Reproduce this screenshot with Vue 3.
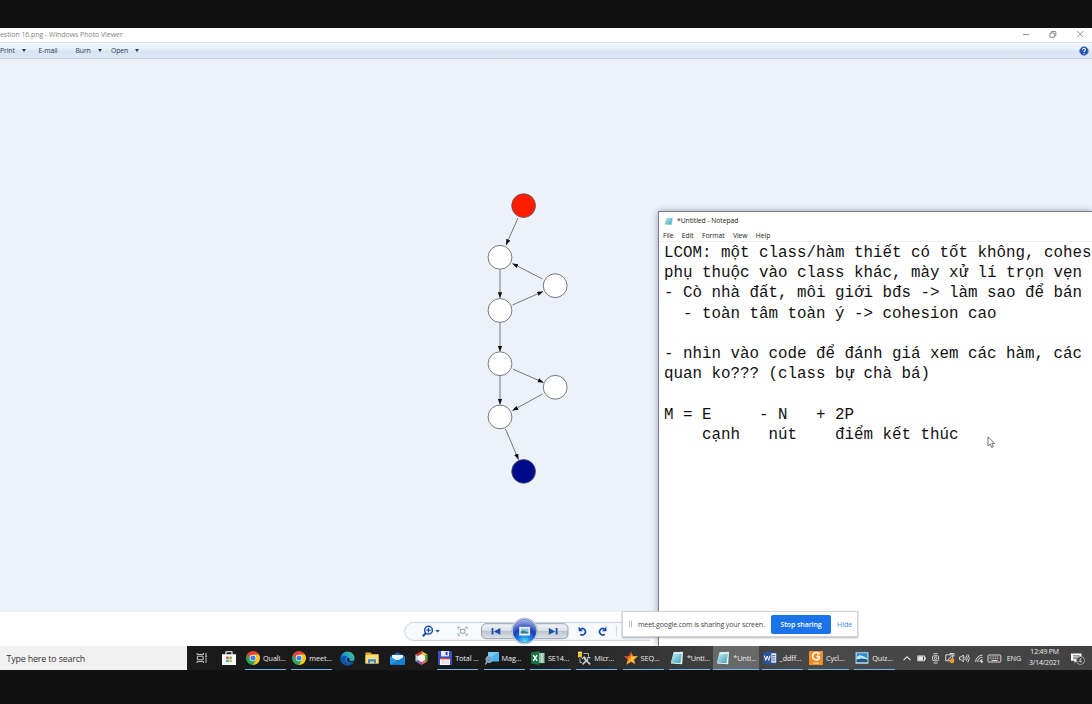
<script setup>
const menus = [
  { label: 'Print', w: 38.5, arrow: true },
  { label: 'E-mail', w: 37, arrow: false },
  { label: 'Burn', w: 35.5, arrow: true },
  { label: 'Open', w: 40, arrow: true },
]
const nodes = [
  [523.6, 205.6, '#ff1c00'],
  [500, 257.3, '#fff'],
  [555.2, 285.7, '#fff'],
  [500, 310.5, '#fff'],
  [500, 363.7, '#fff'],
  [555.2, 387.3, '#fff'],
  [500, 416.9, '#fff'],
  [523.6, 471.4, '#000a8c'],
]
const edges = [
  [518, 218, 506, 245],
  [500, 270, 500, 298],
  [542.5, 279, 512.5, 263.5],
  [512.5, 305, 543, 291.5],
  [500, 323, 500, 351.5],
  [500, 376, 500, 404.5],
  [513, 369.2, 543.5, 382.5],
  [542.5, 394, 512.5, 410.5],
  [505.5, 429, 518.5, 459.5],
]
const notes = `LCOM: một class/hàm thiết có tốt không, cohes
phụ thuộc vào class khác, mày xử lí trọn vẹn
- Cò nhà đất, môi giới bđs -> làm sao để bán
  - toàn tâm toàn ý -> cohesion cao

- nhìn vào code để đánh giá xem các hàm, các
quan ko??? (class bự chà bá)

M = E     - N   + 2P
    cạnh   nút    điểm kết thúc`
const browserTasks = [
  { icon: 'chrome', label: 'Quali...' },
  { icon: 'chrome', label: 'meet...' },
]
const tasks = [
  { icon: 'disk', label: 'Total ...' },
  { icon: 'magnify', label: 'Mag...' },
  { icon: 'excel', label: 'SE14...' },
  { icon: 'tools', label: 'Micr...' },
  { icon: 'star', label: 'SEQ...' },
  { icon: 'note', label: '*Unti...' },
  { icon: 'note', label: '*Unti...', active: true },
  { icon: 'word', label: '_ddff...' },
  { icon: 'foxit', label: 'Cycl...' },
  { icon: 'photo', label: 'Quiz...' },
]
</script>

<template>
  <div class="screen">
    <svg class="defs" width="0" height="0">
      <defs>
        <linearGradient id="noteG" x1="0" y1="0" x2="1" y2="1"><stop offset="0" stop-color="#d5f3f6" /><stop offset="1" stop-color="#3ba1bb" /></linearGradient>
        <linearGradient id="edgeG" x1="0" y1="1" x2="1" y2="0"><stop offset="0" stop-color="#0a57b2" /><stop offset=".5" stop-color="#1791d8" /><stop offset="1" stop-color="#57dc72" /></linearGradient>
        <linearGradient id="starG" x1="0" y1="0" x2="1" y2="1"><stop offset="0" stop-color="#8b3bd0" /><stop offset=".35" stop-color="#f04a2e" /><stop offset=".6" stop-color="#ffc428" /><stop offset="1" stop-color="#e0359c" /></linearGradient>
        <symbol id="chrome" viewBox="0 0 14 14">
          <path d="M7 7 .94 3.5A7 7 0 0 1 13.06 3.5Z" fill="#e74435" />
          <path d="M7 7 .94 3.5A7 7 0 0 0 7 14Z" fill="#2da653" />
          <path d="M7 7V14A7 7 0 0 0 13.06 3.5Z" fill="#fbc617" />
          <path d="M7 3.5h6.06L10 8.7Z" fill="#fbc617" /><path d="M4 8.7.94 3.5 7 3.5Z" fill="#e74435" /><path d="M4 8.7 7 14 10 8.7Z" fill="#2da653" />
          <circle cx="7" cy="7" r="3.3" fill="#fff" /><circle cx="7" cy="7" r="2.6" fill="#3c7fe8" />
        </symbol>
        <symbol id="disk" viewBox="0 0 14 14">
          <path d="M0 0H13L14 1V14H0Z" fill="#3850c4" /><path d="M3 0h8v5.4H3Z" fill="#e7eaf6" /><path d="M7.6 .8h2v3.4H7.6Z" fill="#2c43b8" />
          <path d="M2 7h10v7H2Z" fill="#fff" /><path d="M2 7h10v1.4H2Z" fill="#e0443d" /><path d="M3 10h8M3 12h8" stroke="#b9bfd8" stroke-width=".8" />
        </symbol>
        <symbol id="magnify" viewBox="0 0 14 14">
          <path d="M3 1H14V10.5H5L3 9Z" fill="#4bb2ef" /><path d="M3 1H14L3.5 7.5Z" fill="#78caf6" />
          <circle cx="4" cy="8.4" r="3.2" fill="#6f9fc4" stroke="#9db6c5" stroke-width=".8" /><path d="M2 11 0 13.5" stroke="#8998a5" stroke-width="1.6" />
        </symbol>
        <symbol id="excel" viewBox="0 0 14 14">
          <path d="M7 2h6.5v10H7Z" fill="#f5f9f6" stroke="#23794b" stroke-width=".7" /><path d="M9 4h1.5M9 6h1.5M9 8h1.5M9 10h1.5M11.4 4h1.5M11.4 6h1.5M11.4 8h1.5M11.4 10h1.5" stroke="#23794b" />
          <path d="M0 1.6 8.4 0V14L0 12.4Z" fill="#1b7446" /><path d="M2.2 4.2 6.2 9.8M6.2 4.2 2.2 9.8" stroke="#fff" stroke-width="1.4" />
        </symbol>
        <symbol id="tools" viewBox="0 0 14 14">
          <path d="M1 .8h4v5.6H1Z" fill="#f0be35" /><path d="M1 .8h4v1.4H1Z" fill="#fbe38d" /><path d="M6.5 2.5H11.5v3M3 7.5v4h2" fill="none" stroke="#d2d2d2" stroke-width=".8" />
          <path d="M5.6 13.4 11 8M7 7.4l6.2 6" stroke="#cbd2d6" stroke-width="1.5" /><path d="M5 7.8 7.2 6 9 7.4M10.3 7.3a2.2 2.2 0 0 1 3-.4" fill="none" stroke="#cbd2d6" stroke-width="1.3" />
        </symbol>
        <symbol id="star" viewBox="0 0 14 14">
          <path d="M7 .3 9 5l5 .3-3.9 3.3 1.5 5L7 10.8l-4.6 2.9 1.4-5.1L0 5.3 5 5Z" fill="url(#starG)" /><path d="M7 3.3 8.2 6.3l3 .2-2.3 2 .7 2.8L7 9.6Z" fill="#ffcd3a" />
        </symbol>
        <symbol id="note" viewBox="0 0 14 14">
          <path d="M4.2 1.2 13 .8 12.2 13.2 1 12.6Z" fill="#e9f4f4" /><path d="M3.6 1.6 12 1.6 10.4 12.2.8 11.6Z" fill="url(#noteG)" /><path d="M3.6 1.4 12 1.4 11.8 2.8 3.3 2.6Z" fill="#f1fbfb" />
        </symbol>
        <symbol id="word" viewBox="0 0 14 14">
          <path d="M7 2h6.5v10H7Z" fill="#f5f7fb" stroke="#2a5699" stroke-width=".7" /><path d="M9 4.5h3.4M9 6.2h3.4M9 8h3.4M9 9.7h3.4" stroke="#2a5699" stroke-width=".8" />
          <path d="M0 1.6 8.4 0V14L0 12.4Z" fill="#27549b" /><path d="M1.4 4.5 2.7 9.4 4.2 5 5.7 9.4 7 4.5" fill="none" stroke="#fff" stroke-width="1" />
        </symbol>
        <symbol id="foxit" viewBox="0 0 14 14">
          <path d="M0 0H14V14H0Z" fill="#f68b1f" /><path d="M10.4 3.2A3.7 3.7 0 1 0 10.4 7.2V5.8H7.6" fill="none" stroke="#fff" stroke-width="1.6" /><path d="M8 4.8 11.6 1.4" stroke="#fff" /><path d="M4 12.2h6" stroke="#ffd3a0" stroke-width="1.2" />
        </symbol>
        <symbol id="photo" viewBox="0 0 14 14">
          <path d="M.8 1.4H13.2V12.6H.8Z" fill="#eef6fa" stroke="#8bb9d6" stroke-width=".6" /><path d="M1.6 2.2h10.8v9H1.6Z" fill="#2c8bd0" /><path d="M1.6 6.5C4 3.2 6 4 9 5.6l3.4 1.6V9H1.6Z" fill="#b9e4f5" /><path d="M1.6 8.4 7 7.6l5.4 1V11.2H1.6Z" fill="#21577b" />
        </symbol>
      </defs>
    </svg>

    <div class="letterbox"></div>

    <header class="titlebar">
      <span class="title">estion 16.png - Windows Photo Viewer</span>
      <svg class="winbtns" width="72" height="14" viewBox="0 0 72 14" fill="none" stroke="#858585" stroke-width=".9">
        <path d="M3 6.6h6.2M30 5h4.3v4.3H30ZM31.4 5V3.5h4.4v4.4h-1.5M57.3 3.2 63.3 9.2M63.3 3.2 57.3 9.2" />
      </svg>
    </header>

    <nav class="toolbar">
      <span v-for="m in menus" :key="m.label" class="menu" :style="{ width: m.w + 'px' }">
        <span>{{ m.label }}</span>
        <i v-if="m.arrow" class="arrow"></i>
      </span>
      <svg class="help" width="10" height="10" viewBox="0 0 10 10">
        <circle cx="5" cy="5" r="4.4" fill="#1d4fb5" stroke="#8a9dbc" stroke-width=".8" />
        <path d="M3.5 3.7C3.6 1.9 6.7 2 6.5 3.8 6.4 4.7 5 4.8 5 6M5 7.1v1" stroke="#fff" stroke-width="1.1" fill="none" />
      </svg>
    </nav>

    <main class="canvas">
      <svg class="graph" width="100" height="300" viewBox="474 190 100 300">
        <defs>
          <marker id="arr" markerUnits="userSpaceOnUse" markerWidth="7" markerHeight="6" refX="5.8" refY="2.2" orient="auto"><path d="M0 0 6 2.2 0 4.4Z" fill="#111" /></marker>
        </defs>
        <line v-for="(e, i) in edges" :key="'e' + i" :x1="e[0]" :y1="e[1]" :x2="e[2]" :y2="e[3]" stroke="#555" stroke-width=".8" marker-end="url(#arr)" />
        <circle v-for="(n, i) in nodes" :key="'n' + i" :cx="n[0]" :cy="n[1]" r="11.9" :fill="n[2]" stroke="#57575c" stroke-width=".8" />
      </svg>
    </main>

    <footer class="controls">
      <svg width="250" height="34" viewBox="400 612 250 34">
        <defs>
          <linearGradient id="btn" x1="0" y1="0" x2="0" y2="1"><stop offset="0" stop-color="#f2f5f9" /><stop offset=".45" stop-color="#dce1e8" /><stop offset=".5" stop-color="#bcc4ce" /><stop offset="1" stop-color="#dde3ea" /></linearGradient>
          <radialGradient id="orb" cx=".5" cy=".98" r=".95"><stop offset="0" stop-color="#5fe8ff" /><stop offset=".3" stop-color="#1c86ea" /><stop offset=".6" stop-color="#1a3cb4" /><stop offset="1" stop-color="#a3b2e6" /></radialGradient>
        </defs>
        <rect x="404.7" y="622.4" width="260" height="18" rx="9" fill="#f7fafd" stroke="#bcc5cf" stroke-width=".8" />
        <g fill="none" stroke="#174fa6">
          <circle cx="428.5" cy="630.2" r="3.9" stroke-width="1.5" /><path d="M425.7 633.2 422.8 636.2" stroke-width="2.1" /><path d="M426.3 630.2h4.4M428.5 628v4.4" stroke-width="1.3" />
        </g>
        <path d="M435.4 630h4.4l-2.2 2.5Z" fill="#174fa6" />
        <g fill="none" stroke="#8a9bb2" stroke-width=".9"><rect x="460.3" y="629.3" width="4.6" height="3.8" /><path d="M458 629.3v-2h2M465.2 627.3h2v2M458 633.2v2h2M467.2 633.2v2h-2" /></g>
        <rect x="481.5" y="623.7" width="86.5" height="15" rx="4.5" fill="url(#btn)" stroke="#8e99a7" stroke-width=".9" />
        <path d="M492.5 628.1v6.5M556.6 628.1v6.5" stroke="#174fa6" stroke-width="1.8" /><path d="M500.3 628v6.8l-6.4-3.4ZM548.8 628v6.8l6.4-3.4Z" fill="#174fa6" />
        <circle cx="524.6" cy="631" r="13" fill="#edf1f7" stroke="#a5afbd" stroke-width=".8" /><circle cx="524.6" cy="631" r="11.7" fill="url(#orb)" stroke="#3c59a6" stroke-width=".5" />
        <rect x="519.3" y="627" width="10.6" height="8.3" fill="#f9fcff" stroke="#b9cbe3" stroke-width=".5" /><path d="M520.7 628.5h7.8v5h-7.8Z" fill="#8cc4e0" /><path d="M520.7 631.5l3-1 4.8 2v1h-7.8Z" fill="#357d83" />
        <g fill="none" stroke="#174fa6" stroke-width="1.7"><path d="M580.6 629a3.2 3.2 0 1 1-.3 5.3M604.4 629a3.2 3.2 0 1 0 .3 5.3" /></g>
        <path d="M578.6 626.6v4.7h4.5ZM606.4 626.6v4.7H601.9Z" fill="#174fa6" />
        <path d="M616.4 625.6v11" stroke="#c1c9d3" stroke-width=".8" />
      </svg>
    </footer>

    <section class="notepad">
      <div class="np-title">
        <svg width="10" height="10"><use href="#note" /></svg>
        <span>*Untitled - Notepad</span>
      </div>
      <div class="np-menu"><span>File</span><span>Edit</span><span>Format</span><span>View</span><span>Help</span></div>
      <pre class="np-text">{{ notes }}</pre>
    </section>

    <svg class="cursor" width="9" height="13" viewBox="0 0 9 13"><path d="M1 .9V10L3.2 8 4.7 11.5 6.3 10.8 4.9 7.4H7.8Z" fill="#fff" stroke="#444" stroke-width=".75" /></svg>

    <aside class="share">
      <i class="grip"></i>
      <span class="share-text">meet.google.com is sharing your screen.</span>
      <button>Stop sharing</button>
      <span class="hide">Hide</span>
    </aside>

    <div class="taskbar">
      <div class="search">Type here to search</div>
      <div class="pinned first">
        <svg width="12" height="12" viewBox="0 0 12 12" fill="none" stroke="#ddd" stroke-width=".9"><path d="M1 1v1.4h6.5V1M1 11V9.6h6.5V11M1.4 4.2h5.7v3.6H1.4ZM10 1v2M10 5.5V11" /><path d="M9.3 3.3h1.4v1.6H9.3Z" fill="#ddd" stroke="none" /></svg>
        <svg width="14" height="14" viewBox="0 0 14 14"><path d="M4 3.4V.8h6v2.6" fill="none" stroke="#fff" stroke-width="1.1" /><path d="M0 3.2h14V14H0Z" fill="#f7f7f7" /><path d="M4.2 5.6h2.5v2.5H4.2Z" fill="#e9533a" /><path d="M7.3 5.6h2.5v2.5H7.3Z" fill="#7fb837" /><path d="M4.2 8.7h2.5v2.5H4.2Z" fill="#2ba3e3" /><path d="M7.3 8.7h2.5v2.5H7.3Z" fill="#f7b72a" /></svg>
      </div>
      <div class="tasks">
        <div v-for="t in browserTasks" :key="t.label" class="task"><svg width="14" height="14"><use :href="'#' + t.icon" /></svg><span>{{ t.label }}</span></div>
      </div>
      <div class="pinned second">
        <svg width="15" height="15" viewBox="0 0 15 15"><circle cx="7.5" cy="7.5" r="7" fill="url(#edgeG)" /><path d="M.6 7.2C2.2 4.2 6 4.6 7.4 6 5.6 6.5 5.2 8.6 6.2 10.3 7.4 12 10 12.5 13.2 11.2 11.5 14 8 15 5 14 2 13 .3 10.5.6 7.2Z" fill="#0c55a8" /><path d="M7.4 7.3c.9-.9 2.4-.2 2.2 1-.1.6-.5.9-.2 1.3.6.8 2.6.9 4.6-.2l-.4 1.4c-1.7 1-4 1.1-5.4 0-1.3-.9-1.6-2.5-.8-3.5Z" fill="#191919" /></svg>
        <svg width="14" height="14" viewBox="0 0 14 14"><path d="M.5 1.5h5L7 3h6.5v9.5H.5Z" fill="#e9a92b" /><path d="M.5 4h13v8.5H.5Z" fill="#fddc79" /><path d="M3 8.3h8v4.2H9v-2H5v2H3Z" fill="#348fda" /></svg>
        <svg width="15" height="14" viewBox="0 0 15 14"><path d="M0 5.3 7.5 1.2 15 5.3v8.2H0Z" fill="#1465b4" /><path d="M2 4h11v5H2Z" fill="#eef7fd" /><path d="M0 5.3 7.5 10 15 5.3v8.2H0Z" fill="#1f97ea" /><path d="M0 13.5 7.5 10 15 5.3v8.2Z" fill="#1680d6" /></svg>
        <svg width="13" height="14" viewBox="0 0 13 14"><path d="M6.5 0 12.5 3.5 6.5 7Z" fill="#e6c62b" /><path d="M6.5 0 .5 3.5 6.5 7Z" fill="#d9362e" /><path d="M.5 3.5v7l6-3.5Z" fill="#c7cfd7" /><path d="M12.5 3.5v7L6.5 7Z" fill="#52a744" /><path d="M6.5 14 .5 10.5 6.5 7Z" fill="#7c65b6" /><path d="M6.5 14l6-3.5L6.5 7Z" fill="#e46a54" /><path d="M6.5 3 10 5v4L6.5 11 3 9V5Z" fill="#f4f4ee" /></svg>
      </div>
      <div class="tasks">
        <div v-for="(t, i) in tasks" :key="i" class="task" :class="{ active: t.active }"><svg width="14" height="14"><use :href="'#' + t.icon" /></svg><span>{{ t.label }}</span></div>
      </div>
      <div class="tray">
        <svg width="102" height="14" viewBox="902 651 102 14" fill="none" stroke="#e8e8e8" stroke-width=".9">
          <path d="M903.6 660.1 907 656.7 910.4 660.1" stroke-width="1.1" />
          <rect x="917.8" y="656" width="6.7" height="4.8" /><path d="M918.6 656.8h4v3.2h-4Z" fill="#e8e8e8" /><path d="M925.3 657.2v2.5" />
          <rect x="932.6" y="655.8" width="6" height="5" rx="1.2" /><circle cx="935.6" cy="658.3" r="1.2" /><path d="M933.6 653.7h4M933.6 663h4" />
          <path d="M945.7 654.8h7v6h-7Z" /><path d="M948 660.3c0-3 3.5-1.8 3.5-4.6M949.5 653.5h4.5v3" /><circle cx="952" cy="660.9" r="2.3" fill="#f49a25" stroke="none" />
          <path d="M959.5 657h1.7l2-2v6.7l-2-2h-1.7ZM964.8 656.6q1 1.7 0 3.4M966.3 655.4q2 3 0 5.8M967.8 654.3q3 4 0 8" />
          <path d="M975.6 662a7 7 0 0 1 6.8-6.9M977.7 662a5 5 0 0 1 4.7-4.8M979.8 662a3 3 0 0 1 2.6-2.7" /><circle cx="981.8" cy="661.6" r=".8" fill="#eee" />
          <rect x="988" y="655" width="12.8" height="7" rx=".8" /><path d="M989.7 657h9.4M989.7 658.7h9.4" stroke-dasharray="1 .8" /><path d="M991.5 660.5h6" />
        </svg>
        <span class="lang">ENG</span>
        <div class="clock"><span>12:49 PM</span><span>3/14/2021</span></div>
        <div class="action">
          <svg width="11" height="11" viewBox="0 0 11 11"><path d="M0 .5h10.5v7.2H6L3.6 10V7.7H0Z" fill="#fff" /><path d="M2 2.7h6.5M2 4.2h6.5M2 5.7h4" stroke="#444" stroke-width=".7" /></svg>
          <span class="badge">4</span>
        </div>
      </div>
    </div>
    <div class="letterbox"></div>
  </div>
</template>

<style>
body { background: #111; overflow: hidden; }
</style>

<style scoped>
.screen { position: relative; display: grid; grid-template-rows: 28px 14px 17px 553px 34px 24px 34px; width: 1092px; height: 704px; overflow: hidden; background: #111; font-family: "Open Sans", "Noto Sans", sans-serif; }
.defs { position: absolute; }
.letterbox { background: #111; }
.titlebar { display: flex; justify-content: space-between; background: #fff; color: #858585; font-size: 7px; line-height: 14.5px; white-space: nowrap; }
.title { letter-spacing: -.06px; }
.toolbar { display: flex; align-items: center; background: linear-gradient(#f5f9fd, #e3edf8 45%, #d7e4f2 55%, #dce8f5); border-top: 1px solid #dce3eb; border-bottom: 1px solid #c3d0df; box-sizing: border-box; color: #1e395b; font-size: 6.8px; line-height: 9px; letter-spacing: -.08px; }
.menu { display: flex; align-items: center; gap: 7px; flex: none; }
.arrow { border: 2.4px solid transparent; border-top: 3px solid #1e395b; border-bottom: 0; }
.help { margin-left: auto; margin-right: 3px; }
.canvas { background: #edf2fa; display: flex; padding: 131px 0 0 474px; }
.graph { flex: none; }
.controls { background: #fff; padding-left: 400px; overflow: hidden; }
.controls svg { display: block; }
.notepad { position: absolute; left: 658px; top: 211px; width: 434px; height: 435px; box-sizing: border-box; background: #fff; border-left: 1px solid #777d86; border-top: 1px solid #777d86; box-shadow: 0 0 7px rgba(30, 45, 75, .4); display: flex; flex-direction: column; clip-path: inset(-9px 0 0 -9px); }
.np-title { display: flex; align-items: center; gap: 3px; height: 17px; padding-left: 5px; font-size: 6.8px; letter-spacing: -.05px; color: #222; }
.np-menu { display: flex; gap: 8.3px; height: 13px; align-items: center; padding-left: 4px; font-size: 6.8px; color: #222; border-bottom: 1px solid #f0f0f0; box-sizing: border-box; letter-spacing: -.05px; }
.np-text { margin: 0; padding: 1px 0 0 5px; font-family: "Liberation Mono", monospace; font-size: 15.83px; line-height: 20.22px; color: #111; }
.cursor { position: absolute; left: 987px; top: 436px; }
.share { position: absolute; left: 622px; top: 611px; width: 236px; height: 26px; box-sizing: border-box; display: flex; align-items: center; background: #fff; border: 1px solid #d0d2d6; box-shadow: 0 1px 2px rgba(0, 0, 0, .3); padding-left: 6px; color: #444; font-size: 7px; }
.grip { width: 1px; height: 6px; border-left: 1px solid #bbb; border-right: 1px solid #bbb; margin-right: 6px; }
.share-text { width: 133px; white-space: nowrap; letter-spacing: -.12px; }
.share button { width: 60px; height: 19px; padding: 0; border: 0; border-radius: 2px; background: #1a73e8; color: #fff; font: 600 7px "Open Sans", sans-serif; letter-spacing: -.1px; }
.hide { margin-left: 6px; color: #4285e8; }
.taskbar { display: flex; background: linear-gradient(90deg, #1a1a1a 0 48%, #3e3e3e 64%, #494949 75%, #424242); color: #eee; }
.search { width: 187px; flex: none; box-sizing: border-box; padding-left: 6.5px; background: #f2f2f2; color: #333; font-size: 8.9px; letter-spacing: -.25px; word-spacing: .2px; line-height: 25px; }
.search { letter-spacing: -.2px; }
.pinned { display: flex; align-items: center; flex: none; box-sizing: border-box; }
.first { width: 58px; padding-left: 9px; gap: 14px; }
.second { width: 99.5px; padding-left: 2px; gap: 10.5px; }
.tasks { display: flex; flex: none; }
.task { width: 46.35px; box-sizing: border-box; display: flex; align-items: center; gap: 3px; padding-left: 1px; font-size: 7.3px; letter-spacing: -.12px; white-space: nowrap; background: linear-gradient(#76b3ec, #76b3ec) 0 100% / 41.3px 1px no-repeat; }
.task svg { flex: none; }
.active { background: linear-gradient(#76b3ec, #76b3ec) 0 100% / 46px 1px no-repeat, linear-gradient(#686868, #686868) 0 0 / 46px 100% no-repeat; margin-left: -2.5px; width: 48.85px; padding-left: 3.5px; }
.tray { display: flex; align-items: center; flex: none; margin-left: 1px; }
.lang { font-size: 7.3px; width: 20px; margin-left: 3px; letter-spacing: -.1px; }
.clock { display: flex; flex-direction: column; align-items: center; width: 36px; font-size: 6.9px; line-height: 10.8px; white-space: nowrap; letter-spacing: -.15px; }
.action { position: relative; margin-left: 8px; height: 11px; }
.action svg { display: block; }
.badge { position: absolute; left: 5px; top: 3px; width: 9px; height: 9px; border: 1px solid #aaa; box-sizing: border-box; border-radius: 50%; background: #333; font-size: 6.5px; line-height: 7px; text-align: center; }
</style>
